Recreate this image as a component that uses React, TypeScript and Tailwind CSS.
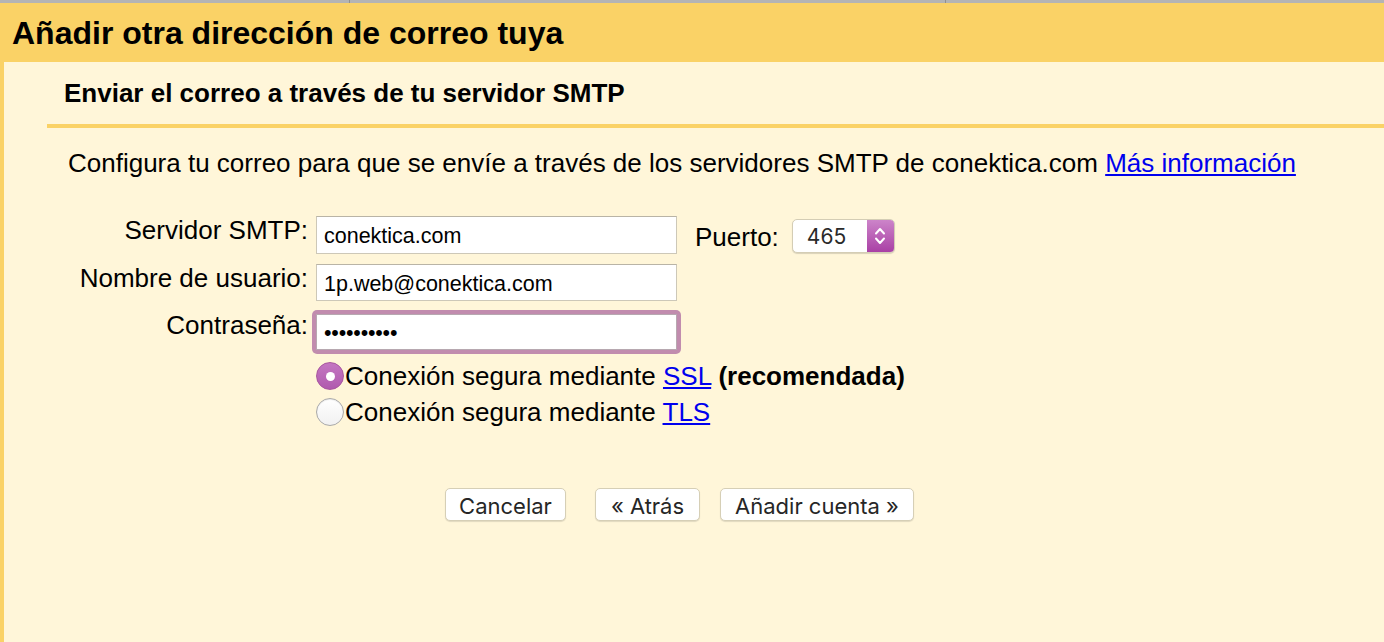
const font = "font-['Liberation_Sans','Arial',sans-serif]";

function Radio({ checked }: { checked: boolean }) {
  return checked ? (
    <span className="flex h-[28px] w-[28px] shrink-0 items-center justify-center rounded-full bg-gradient-to-b from-[#c477c2] to-[#b05aae] border border-[#a8559f]">
      <span className="h-[9px] w-[9px] rounded-full bg-white" />
    </span>
  ) : (
    <span className="h-[28px] w-[28px] shrink-0 rounded-full border border-[#a9a9a9] bg-gradient-to-b from-white to-[#f1f1f1] shadow-[inset_0_1px_1px_rgba(0,0,0,0.08)]" />
  );
}

function FormButton({ label, className }: { label: string; className?: string }) {
  return (
    <button
      className={`h-[33px] rounded-[5px] border border-[#d6cfb6] bg-white px-[12px] pt-[2px] text-[22px] leading-none text-[#262626] shadow-[0_1px_1px_rgba(0,0,0,0.12)] font-['Inter','Liberation_Sans',sans-serif] ${className ?? ""}`}
    >
      {label}
    </button>
  );
}

export default function App() {
  return (
    <div className={`flex h-[642px] w-[1384px] flex-col overflow-hidden bg-[#fff6d9] ${font} text-black`}>
      {/* browser strip */}
      <div className="flex h-[3px] bg-[#b4b4b4]">
        <div className="w-[349px]" />
        <div className="w-px bg-[#8f8f8f]" />
        <div className="w-[595px]" />
        <div className="w-px bg-[#8f8f8f]" />
      </div>

      <div className="flex h-[59px] items-center bg-[#fad266] pl-[12px]">
        <h1 className="text-[32px] font-bold leading-none">Añadir otra dirección de correo tuya</h1>
      </div>

      <div className="flex flex-1 flex-col border-l-4 border-[#fad266]">
        <div className="flex h-[62px] items-center pl-[60px]">
          <h2 className="text-[26px] font-bold leading-none">Enviar el correo a través de tu servidor SMTP</h2>
        </div>
        <div className="ml-[43px] h-[4px] bg-[#fad266]" />

        <p className="mt-[20px] pl-[64px] text-[26px] leading-[31px]">
          Configura tu correo para que se envíe a través de los servidores SMTP de conektica.com{" "}
          <a className="text-[#0000ee] underline" href="#">Más información</a>
        </p>

        <div className="mt-[37px] flex flex-col text-[26px] leading-[28px]">
          <div className="flex items-start">
            <label className="w-[304px] shrink-0 text-right">Servidor SMTP:</label>
            <input
              readOnly
              value="conektica.com"
              className={`ml-[8px] h-[38px] w-[361px] border border-[#cdc8b8] border-t-[#b9b4a6] bg-white px-[7px] pt-[3px] text-[21.5px] text-black outline-none ${font}`}
            />
            <span className="ml-[18px] mt-[7px]">Puerto:</span>
            <div className="ml-[13px] mt-[3px] flex h-[34px] w-[103px] overflow-hidden rounded-[5px] border border-[#d4cdb5] bg-white shadow-[0_1px_1px_rgba(0,0,0,0.15)]">
              <span className="flex flex-1 items-center pl-[14px] pt-[2px] text-[21px] text-[#2a2a2a] font-['Inter','Liberation_Sans',sans-serif]">465</span>
              <span className="flex w-[27px] items-center justify-center bg-gradient-to-b from-[#cc84c9] to-[#a93fa5]">
                <svg width="12" height="22" viewBox="0 0 12 22" fill="none" stroke="white" strokeWidth="2" strokeLinecap="round" strokeLinejoin="round">
                  <path d="M2 8.5 L6 4 L10 8.5" />
                  <path d="M2 13.5 L6 18 L10 13.5" />
                </svg>
              </span>
            </div>
          </div>

          <div className="mt-[10px] flex items-start">
            <label className="w-[304px] shrink-0 text-right">Nombre de usuario:</label>
            <input
              readOnly
              value="1p.web@conektica.com"
              className={`ml-[8px] h-[37px] w-[361px] border border-[#cdc8b8] border-t-[#b9b4a6] bg-white px-[7px] pt-[3px] text-[21.5px] text-black outline-none ${font}`}
            />
          </div>

          <div className="mt-[9px] flex items-start">
            <label className="w-[304px] shrink-0 pt-[1px] text-right">Contraseña:</label>
            <div className="ml-[4px] rounded-[5px] bg-[#c18cae] p-[4px]">
              <input
                readOnly
                type="password"
                value="1234567890"
                className={`block h-[36px] w-[361px] border border-[#b7a8b0] bg-white px-[7px] pt-[2px] text-[21.5px] tracking-[-0.2px] text-black outline-none ${font}`}
              />
            </div>
          </div>

          <div className="mt-[8px] flex items-center pl-[312px]">
            <Radio checked />
            <span className="ml-[1px]">
              Conexión segura mediante <a className="text-[#0000ee] underline" href="#">SSL</a>{" "}
              <b>(recomendada)</b>
            </span>
          </div>

          <div className="mt-[8px] flex items-center pl-[312px]">
            <Radio checked={false} />
            <span className="ml-[1px]">
              Conexión segura mediante <a className="text-[#0000ee] underline" href="#">TLS</a>
            </span>
          </div>
        </div>

        <div className="mt-[62px] flex pl-[441px]">
          <FormButton label="Cancelar" className="w-[121px]" />
          <FormButton label="« Atrás" className="ml-[29px] w-[105px]" />
          <FormButton label="Añadir cuenta »" className="ml-[20px] w-[194px]" />
        </div>
      </div>
    </div>
  );
}
